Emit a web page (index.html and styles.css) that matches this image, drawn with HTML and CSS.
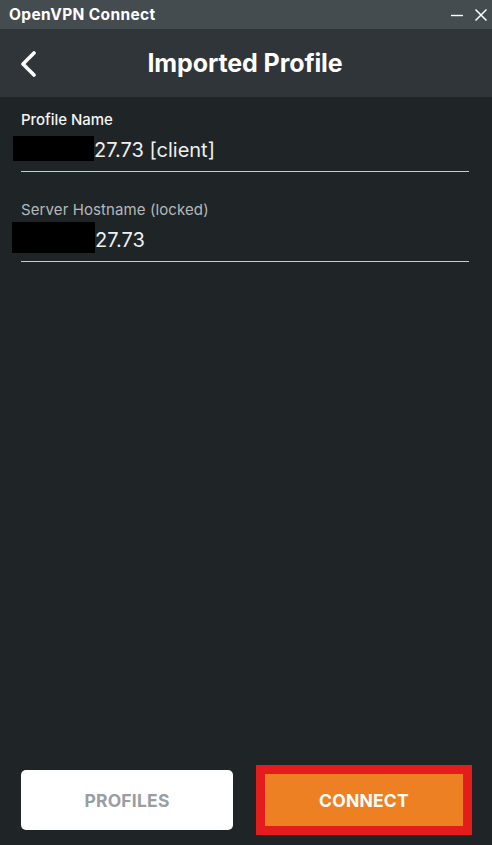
FILE: index.html
```html
<!DOCTYPE html>
<html>
<head>
<meta charset="utf-8">
<link rel="stylesheet" href="styles.css">
</head>
<body>
<div class="app">
  <div class="titlebar">
    <span class="app-name">OpenVPN Connect</span>
    <div class="win-controls">
      <svg width="14" height="14" viewBox="0 0 14 14"><path d="M1 7.5H13" stroke="#fff" stroke-width="1.4"/></svg>
      <svg width="14" height="14" viewBox="0 0 14 14"><path d="M1.5 1.5L12.5 12.5M12.5 1.5L1.5 12.5" stroke="#fff" stroke-width="1.5"/></svg>
    </div>
  </div>
  <div class="header">
    <svg class="back" width="20" height="26" viewBox="0 0 20 26"><path d="M15 2L4 13L15 24" fill="none" stroke="#fff" stroke-width="3.6" stroke-linecap="round" stroke-linejoin="round"/></svg>
    <h1 class="title">Imported Profile</h1>
  </div>
  <div class="content">
    <div class="field">
      <div class="label">Profile Name</div>
      <div class="value"><span class="redact r1"></span>27.73 [client]</div>
    </div>
    <div class="field">
      <div class="label muted">Server Hostname (locked)</div>
      <div class="value"><span class="redact r2"></span>27.73</div>
    </div>
  </div>
  <div class="actions">
    <button class="btn btn-profiles">PROFILES</button>
    <div class="highlight"><button class="btn btn-connect">CONNECT</button></div>
  </div>
</div>
</body>
</html>
```
FILE: styles.css
```css
* { box-sizing: border-box; }
html, body { margin: 0; padding: 0; }
body { background: #1f2427; font-family: Inter, "Noto Sans", sans-serif; color: #fff; }
.app { width: 492px; height: 845px; display: flex; flex-direction: column; }
.titlebar { height: 29px; background: #454c4f; display: flex; align-items: center; justify-content: space-between; padding: 0 4px 0 9px; }
.app-name { font-size: 15.5px; font-weight: 700; letter-spacing: 0.35px; }
.win-controls { display: flex; gap: 10px; align-items: center; padding-top: 1px; }
.header { height: 68px; background: #2f3538; position: relative; display: flex; align-items: center; justify-content: center; }
.back { position: absolute; left: 19px; top: 22px; }
.title { margin: 0; font-size: 25px; font-weight: 700; letter-spacing: -0.1px; padding-right: 2px; }
.content { flex: 1; padding: 14px 23px 0 21px; display: flex; flex-direction: column; gap: 29px; }
.field { border-bottom: 1px solid #c9cccd; }
.label { font-size: 15px; font-weight: 450; color: #f4f4f4; line-height: 18px; letter-spacing: -0.05px; }
.label.muted { color: #b5b9bb; font-weight: 400; letter-spacing: 0.1px; }
.value { font-size: 20px; line-height: 28px; color: #eef0f0; display: flex; align-items: flex-start; margin-left: -8px; padding: 7px 0 7px; }
.redact { display: inline-block; background: #000; flex: none; }
.r1 { width: 81px; height: 25px; margin-top: 0; }
.r2 { width: 83px; height: 31px; margin-left: -1px; margin-top: -4px; margin-bottom: -3px; }
.actions { display: flex; align-items: center; padding: 0 20px 10px 21px; justify-content: space-between; }
.btn { border: none; font-family: Inter, "Noto Sans", sans-serif; font-size: 17.5px; font-weight: 700; letter-spacing: 0.2px; }
.btn-profiles { width: 212px; height: 60px; background: #fff; color: #9a9ea2; border-radius: 5px; }
.highlight { border: 9px solid #e41c1c; width: 216px; height: 70px; }
.btn-connect { width: 100%; height: 100%; background: #ee8024; color: #fff; }
```
